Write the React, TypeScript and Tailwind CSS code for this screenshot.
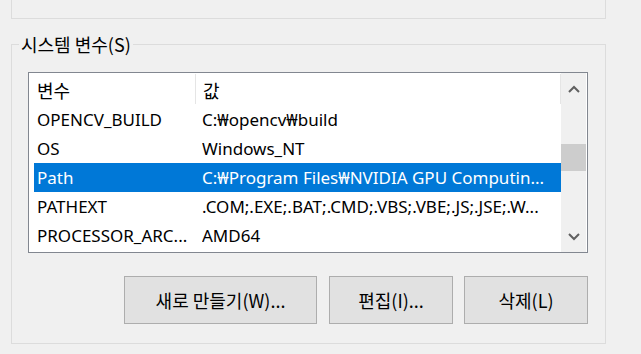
import React from "react";

const rows = [
  { name: "OPENCV_BUILD", value: "C:₩opencv₩build" },
  { name: "OS", value: "Windows_NT" },
  { name: "Path", value: "C:₩Program Files₩NVIDIA GPU Computin...", selected: true },
  { name: "PATHEXT", value: ".COM;.EXE;.BAT;.CMD;.VBS;.VBE;.JS;.JSE;.W..." },
  { name: "PROCESSOR_ARC...", value: "AMD64" },
];

const font = { fontFamily: '"Noto Sans", "Noto Sans CJK KR", sans-serif' };
const kr = { fontFamily: '"Noto Sans CJK KR", sans-serif' };

function Chevron({ up }: { up?: boolean }) {
  return (
    <svg width="12" height="8" viewBox="0 0 12 8">
      <polyline
        points={up ? "1,7 6,2 11,7" : "1,1 6,6 11,1"}
        fill="none"
        stroke="#606060"
        strokeWidth="2"
      />
    </svg>
  );
}

export default function App() {
  return (
    <div
      className="w-[641px] h-[354px] bg-[#f0f0f0] overflow-hidden text-black"
      style={font}
    >
      <div className="ml-[11px] w-[595px] h-[19px] border-l border-r border-b border-[#dcdcdc]" />
      <div className="relative ml-[11px] mt-[25px] w-[595px] h-[300px] border border-[#dcdcdc] flex flex-col">
        <div
          className="absolute left-[7px] top-[-13px] px-[2px] bg-[#f0f0f0] text-[18px] leading-[24px]"
          style={kr}
        >
          시스템 변수(S)
        </div>
        <div className="ml-[16px] mt-[27px] w-[560px] h-[181px] border border-[#828790] bg-white flex">
          <div className="w-[532px] flex flex-col">
            <div className="h-[32px] flex items-center relative">
              <div className="w-[166px] pl-[8px] text-[18px] pt-[2px]" style={kr}>
                변수
              </div>
              <div className="w-[1px] h-[30px] bg-[#e5e5e5]" />
              <div className="flex-1 pl-[7px] text-[18px] pt-[2px]" style={kr}>
                값
              </div>
              <div className="w-[1px] h-[30px] bg-[#e5e5e5]" />
            </div>
            {rows.map((r) => (
              <div
                key={r.name}
                className={
                  "ml-[5px] h-[29px] flex items-center whitespace-nowrap text-[17px] pt-[1px] " +
                  (r.selected ? "bg-[#0078d7] text-white" : "")
                }
              >
                <div className="w-[168px] pl-[3px] overflow-hidden">{r.name}</div>
                <div className="flex-1 overflow-hidden">{r.value}</div>
              </div>
            ))}
          </div>
          <div className="w-[25px] bg-[#f0f0f0] flex flex-col items-center">
            <div className="h-[31px] flex items-center justify-center">
              <Chevron up />
            </div>
            <div className="h-[40px]" />
            <div className="w-[25px] h-[27px] bg-[#cdcdcd]" />
            <div className="flex-1" />
            <div className="h-[31px] flex items-center justify-center">
              <Chevron />
            </div>
          </div>
        </div>
        <div className="flex ml-[112px] mt-[23px]">
          <button className="w-[193px] h-[48px] bg-[#e1e1e1] border border-[#adadad] text-[18px]" style={kr}>
            새로 만들기(W)...
          </button>
          <button className="ml-[12px] w-[124px] h-[48px] bg-[#e1e1e1] border border-[#adadad] text-[18px]" style={kr}>
            편집(I)...
          </button>
          <button className="ml-[11px] w-[124px] h-[48px] bg-[#e1e1e1] border border-[#adadad] text-[18px]" style={kr}>
            삭제(L)
          </button>
        </div>
      </div>
    </div>
  );
}
